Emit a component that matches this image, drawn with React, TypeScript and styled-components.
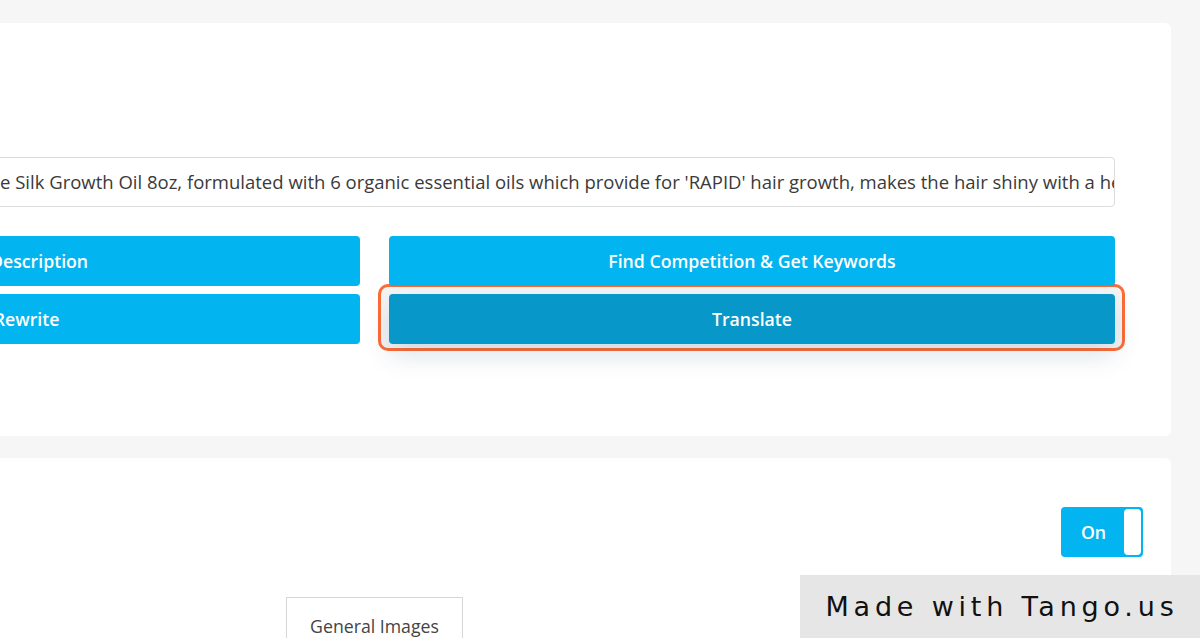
import styled, { createGlobalStyle } from "styled-components";

const GlobalStyle = createGlobalStyle`
  html, body {
    margin: 0;
    padding: 0;
    background: #f6f6f6;
    font-family: "Open Sans", "Liberation Sans", sans-serif;
  }
`;

const Page = styled.div`
  position: relative;
  width: 1200px;
  height: 638px;
  overflow: hidden;
  padding-top: 23px;
  box-sizing: border-box;
`;

const Card = styled.section<{ $pad: string }>`
  width: 1593px;
  margin-left: -422px;
  box-sizing: border-box;
  background: #fff;
  border-radius: 6px;
  padding: ${(p) => p.$pad};
`;

const SecondCard = styled(Card)`
  margin-top: 22px;
  height: 400px;
`;

const Grid = styled.div`
  display: grid;
  grid-template-columns: 726px 726px;
  column-gap: 29px;
  row-gap: 8px;
`;

const TextField = styled.div`
  grid-column: 1 / span 2;
  height: 50px;
  margin-bottom: 21px;
  box-sizing: border-box;
  border: 1px solid #dcdcdc;
  border-radius: 4px;
  padding: 0 18px 1px 365px;
  display: flex;
  align-items: center;
  overflow: hidden;
  white-space: nowrap;
  font-size: 18.5px;
  color: #3a3a3a;
`;

const ActionButton = styled.button<{ $active?: boolean }>`
  position: relative;
  z-index: 2;
  width: 100%;
  height: 50px;
  border: none;
  border-radius: 4px;
  background: ${(p) => (p.$active ? "#0797c8" : "#02b4ef")};
  color: #fff;
  font-family: "Open Sans", "Liberation Sans", sans-serif;
  font-weight: 600;
  font-size: 17.7px;
  cursor: pointer;
  box-shadow: ${(p) =>
    p.$active ? "0 12px 26px rgba(0, 70, 110, 0.14)" : "none"};
`;

const Highlighted = styled.div`
  position: relative;
`;

const Ring = styled.span`
  position: absolute;
  inset: -10px -10px -7px -11px;
  z-index: 1;
  border: 3px solid #ff6a35;
  border-radius: 10px;
  background: #f4f4f4;
`;

const ToggleRow = styled.div`
  display: flex;
  justify-content: flex-end;
`;

const Toggle = styled.div`
  width: 82px;
  height: 50px;
  box-sizing: border-box;
  display: flex;
  align-items: stretch;
  background: #02b4ef;
  border-radius: 4px;
  padding: 2px;
`;

const ToggleLabel = styled.span`
  flex: 1;
  display: flex;
  align-items: center;
  justify-content: center;
  color: #fff;
  font-weight: 600;
  font-size: 17.7px;
`;

const Knob = styled.span`
  width: 17px;
  background: #fff;
  border-radius: 4px;
`;

const Tabs = styled.div`
  display: flex;
  margin-top: 40px;
  padding-left: 652px;
`;

const Tab = styled.div`
  width: 177px;
  height: 58px;
  box-sizing: border-box;
  border: 1px solid #d6d6d6;
  display: flex;
  align-items: center;
  justify-content: center;
  font-size: 17.7px;
  color: #444;
`;

const Watermark = styled.div`
  position: absolute;
  right: 0;
  bottom: 0;
  width: 400px;
  height: 63px;
  background: #e6e6e6;
  display: flex;
  align-items: center;
  justify-content: center;
  padding-left: 4px;
  box-sizing: border-box;
  font-family: "DejaVu Sans", "Liberation Sans", sans-serif;
  font-size: 27px;
  letter-spacing: 4.8px;
  color: #111;
`;

export default function App() {
  return (
    <>
      <GlobalStyle />
      <Page>
        <Card $pad="134px 56px 92px 56px">
          <Grid>
            <TextField>
              e Silk Growth Oil 8oz, formulated with 6 organic essential oils which provide for 'RAPID' hair growth, makes the hair shiny with a healthy glow
            </TextField>
            <ActionButton>Generate Description</ActionButton>
            <ActionButton>Find Competition &amp; Get Keywords</ActionButton>
            <ActionButton>Spin &amp; Rewrite</ActionButton>
            <Highlighted>
              <Ring />
              <ActionButton $active>Translate</ActionButton>
            </Highlighted>
          </Grid>
        </Card>
        <SecondCard $pad="49px 28px 0 56px">
          <ToggleRow>
            <Toggle>
              <ToggleLabel>On</ToggleLabel>
              <Knob />
            </Toggle>
          </ToggleRow>
          <Tabs>
            <Tab>General Images</Tab>
          </Tabs>
        </SecondCard>
        <Watermark>Made with Tango.us</Watermark>
      </Page>
    </>
  );
}
